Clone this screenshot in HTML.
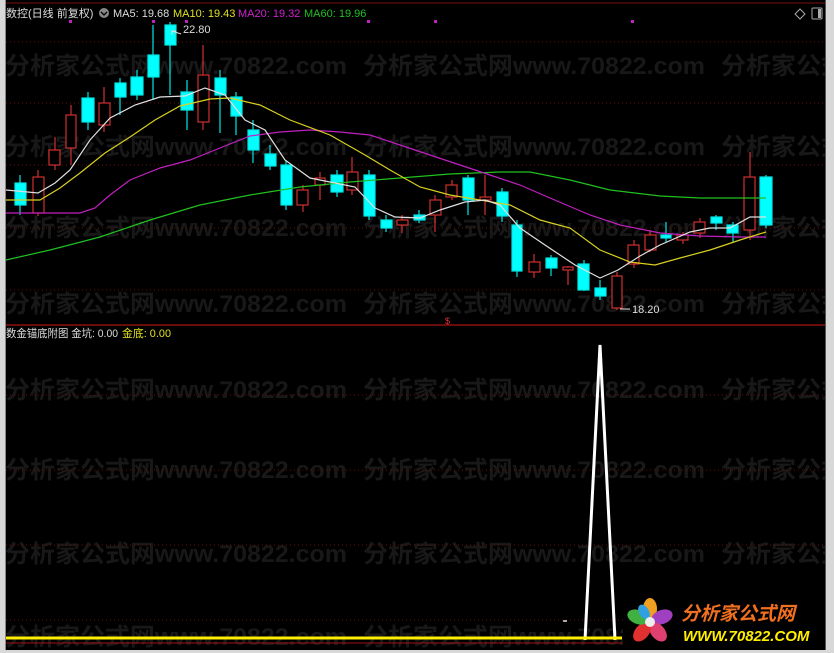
<!DOCTYPE html>
<html><head><meta charset="utf-8"><style>
html,body{margin:0;padding:0;background:#000;width:834px;height:653px;overflow:hidden}
#f{position:absolute;left:0;top:0;width:834px;height:653px}
</style></head><body>
<svg id="f" width="834" height="653" xmlns="http://www.w3.org/2000/svg">
<rect width="834" height="653" fill="#000"/>
<defs></defs>
<g font-family="Liberation Sans, Noto Sans CJK SC, sans-serif" font-weight="bold" font-size="24" fill="#181818">
<g id="r1">
<text x="5" y="74" textLength="342" lengthAdjust="spacingAndGlyphs">分析家公式网www.70822.com</text>
<text x="363" y="74" textLength="342" lengthAdjust="spacingAndGlyphs">分析家公式网www.70822.com</text>
<text x="721" y="74" textLength="342" lengthAdjust="spacingAndGlyphs">分析家公式网www.70822.com</text>
</g>
<text x="5" y="155" textLength="342" lengthAdjust="spacingAndGlyphs">分析家公式网www.70822.com</text>
<text x="363" y="155" textLength="342" lengthAdjust="spacingAndGlyphs">分析家公式网www.70822.com</text>
<text x="721" y="155" textLength="342" lengthAdjust="spacingAndGlyphs">分析家公式网www.70822.com</text>
<text x="5" y="236" textLength="342" lengthAdjust="spacingAndGlyphs">分析家公式网www.70822.com</text>
<text x="363" y="236" textLength="342" lengthAdjust="spacingAndGlyphs">分析家公式网www.70822.com</text>
<text x="721" y="236" textLength="342" lengthAdjust="spacingAndGlyphs">分析家公式网www.70822.com</text>
<text x="5" y="312" textLength="342" lengthAdjust="spacingAndGlyphs">分析家公式网www.70822.com</text>
<text x="363" y="312" textLength="342" lengthAdjust="spacingAndGlyphs">分析家公式网www.70822.com</text>
<text x="721" y="312" textLength="342" lengthAdjust="spacingAndGlyphs">分析家公式网www.70822.com</text>
<text x="5" y="398" textLength="342" lengthAdjust="spacingAndGlyphs">分析家公式网www.70822.com</text>
<text x="363" y="398" textLength="342" lengthAdjust="spacingAndGlyphs">分析家公式网www.70822.com</text>
<text x="721" y="398" textLength="342" lengthAdjust="spacingAndGlyphs">分析家公式网www.70822.com</text>
<text x="5" y="478" textLength="342" lengthAdjust="spacingAndGlyphs">分析家公式网www.70822.com</text>
<text x="363" y="478" textLength="342" lengthAdjust="spacingAndGlyphs">分析家公式网www.70822.com</text>
<text x="721" y="478" textLength="342" lengthAdjust="spacingAndGlyphs">分析家公式网www.70822.com</text>
<text x="5" y="562" textLength="342" lengthAdjust="spacingAndGlyphs">分析家公式网www.70822.com</text>
<text x="363" y="562" textLength="342" lengthAdjust="spacingAndGlyphs">分析家公式网www.70822.com</text>
<text x="721" y="562" textLength="342" lengthAdjust="spacingAndGlyphs">分析家公式网www.70822.com</text>
<text x="5" y="645" textLength="342" lengthAdjust="spacingAndGlyphs">分析家公式网www.70822.com</text>
<text x="363" y="645" textLength="342" lengthAdjust="spacingAndGlyphs">分析家公式网www.70822.com</text>
<text x="721" y="645" textLength="342" lengthAdjust="spacingAndGlyphs">分析家公式网www.70822.com</text>
</g>
<g stroke="#6a1010" stroke-width="1" stroke-dasharray="1,3">
<line x1="6" y1="42" x2="825" y2="42"/><line x1="6" y1="103" x2="825" y2="103"/><line x1="6" y1="165" x2="825" y2="165"/><line x1="6" y1="228" x2="825" y2="228"/><line x1="6" y1="290" x2="825" y2="290"/>
<line x1="6" y1="395" x2="825" y2="395"/><line x1="6" y1="470" x2="825" y2="470"/><line x1="6" y1="545" x2="825" y2="545"/><line x1="6" y1="620" x2="825" y2="620"/>
</g>
<line x1="6" y1="325" x2="825" y2="325" stroke="#8a1010" stroke-width="1.5"/>
<line x1="6" y1="3" x2="825" y2="3" stroke="#7a1010" stroke-width="1"/>
<g fill="#c020c0"><rect x="69" y="20" width="3" height="3"/><rect x="152" y="20" width="3" height="3"/><rect x="185" y="20" width="3" height="3"/><rect x="367" y="20" width="3" height="3"/><rect x="434" y="20" width="3" height="3"/><rect x="631" y="20" width="3" height="3"/></g>
<g stroke-width="1.2">
<g stroke="#00e5e5" fill="#00ffff">
<line x1="20" y1="175" x2="20" y2="215"/><rect x="15" y="183" width="11" height="22"/>
<line x1="88" y1="92" x2="88" y2="130"/><rect x="82" y="98" width="12" height="24"/>
<line x1="120" y1="78" x2="120" y2="115"/><rect x="115" y="83" width="11" height="14"/>
<line x1="137" y1="70" x2="137" y2="100"/><rect x="131" y="77" width="12" height="18"/>
<line x1="153" y1="25" x2="153" y2="100"/><rect x="148" y="55" width="11" height="22"/>
<line x1="170" y1="22" x2="170" y2="95"/><rect x="165" y="25" width="11" height="20"/>
<line x1="187" y1="80" x2="187" y2="130"/><rect x="181" y="92" width="12" height="18"/>
<line x1="220" y1="70" x2="220" y2="133"/><rect x="215" y="78" width="11" height="17"/>
<line x1="236" y1="92" x2="236" y2="135"/><rect x="231" y="97" width="11" height="19"/>
<line x1="253" y1="120" x2="253" y2="163"/><rect x="248" y="130" width="11" height="20"/>
<line x1="270" y1="145" x2="270" y2="170"/><rect x="265" y="154" width="11" height="12"/>
<line x1="286" y1="160" x2="286" y2="210"/><rect x="281" y="165" width="11" height="40"/>
<line x1="337" y1="170" x2="337" y2="197"/><rect x="331" y="175" width="12" height="17"/>
<line x1="369" y1="170" x2="369" y2="220"/><rect x="364" y="175" width="11" height="41"/>
<line x1="386" y1="215" x2="386" y2="232"/><rect x="381" y="220" width="11" height="8"/>
<line x1="419" y1="210" x2="419" y2="223"/><rect x="414" y="215" width="11" height="5"/>
<line x1="468" y1="175" x2="468" y2="215"/><rect x="463" y="178" width="11" height="22"/>
<line x1="502" y1="188" x2="502" y2="222"/><rect x="497" y="192" width="11" height="24"/>
<line x1="517" y1="220" x2="517" y2="277"/><rect x="512" y="225" width="10" height="46"/>
<line x1="551" y1="255" x2="551" y2="276"/><rect x="546" y="258" width="11" height="10"/>
<line x1="584" y1="260" x2="584" y2="291"/><rect x="578" y="264" width="11" height="26"/>
<line x1="600" y1="280" x2="600" y2="300"/><rect x="595" y="288" width="11" height="8"/>
<line x1="666" y1="222" x2="666" y2="242"/><rect x="661" y="235" width="10" height="3"/>
<line x1="716" y1="215" x2="716" y2="230"/><rect x="711" y="217" width="11" height="6"/>
<line x1="733" y1="222" x2="733" y2="242"/><rect x="727" y="225" width="11" height="8"/>
<line x1="766" y1="175" x2="766" y2="228"/><rect x="760" y="177" width="12" height="48"/>
</g>
<g stroke="#d03030" fill="#000">
<line x1="38" y1="170" x2="38" y2="216"/><rect x="33" y="177" width="11" height="36"/>
<line x1="55" y1="137" x2="55" y2="170"/><rect x="49" y="150" width="11" height="15"/>
<line x1="71" y1="105" x2="71" y2="165"/><rect x="66" y="115" width="10" height="33"/>
<line x1="104" y1="87" x2="104" y2="132"/><rect x="99" y="103" width="11" height="22"/>
<line x1="203" y1="45" x2="203" y2="130"/><rect x="198" y="75" width="11" height="47"/>
<line x1="303" y1="185" x2="303" y2="212"/><rect x="297" y="190" width="11" height="15"/>
<line x1="320" y1="172" x2="320" y2="200"/><rect x="315" y="178" width="10" height="7"/>
<line x1="352" y1="157" x2="352" y2="195"/><rect x="347" y="172" width="11" height="18"/>
<line x1="402" y1="215" x2="402" y2="233"/><rect x="397" y="220" width="11" height="5"/>
<line x1="435" y1="195" x2="435" y2="232"/><rect x="430" y="200" width="11" height="15"/>
<line x1="452" y1="180" x2="452" y2="200"/><rect x="446" y="185" width="11" height="12"/>
<line x1="485" y1="175" x2="485" y2="215"/><rect x="480" y="197" width="11" height="3"/>
<line x1="534" y1="254" x2="534" y2="278"/><rect x="529" y="262" width="11" height="10"/>
<line x1="568" y1="266" x2="568" y2="285"/><rect x="563" y="267" width="10" height="3"/>
<line x1="617" y1="272" x2="617" y2="310"/><rect x="612" y="276" width="10" height="32"/>
<line x1="634" y1="240" x2="634" y2="268"/><rect x="628" y="245" width="11" height="19"/>
<line x1="650" y1="230" x2="650" y2="252"/><rect x="645" y="235" width="11" height="15"/>
<line x1="683" y1="232" x2="683" y2="244"/><rect x="677" y="235" width="11" height="5"/>
<line x1="700" y1="218" x2="700" y2="238"/><rect x="694" y="222" width="11" height="11"/>
<line x1="750" y1="152" x2="750" y2="240"/><rect x="744" y="177" width="11" height="53"/>
</g>
</g>
<g fill="none" stroke-width="1.2">
<polyline stroke="#20c020" points="6,260 50,250 100,237 150,220 200,205 250,195 300,187 350,182 400,178 450,174 500,172 530,172 570,180 610,190 660,196 700,198 740,198 766,198"/>
<polyline stroke="#c020c0" points="6,213 60,213 80,213 95,208 110,195 130,180 160,168 190,160 220,148 250,136 280,132 310,130 340,132 370,135 400,145 430,155 460,165 490,175 520,185 550,198 590,215 620,225 660,233 700,236 740,237 766,237"/>
<polyline stroke="#d8d020" points="6,200 40,200 60,188 80,173 105,153 130,137 155,120 180,106 210,99 230,98 260,105 290,120 330,135 365,155 390,170 420,187 450,195 480,200 510,205 540,220 570,228 600,250 630,262 655,265 680,258 710,250 740,240 766,232"/>
<polyline stroke="#e0e0e0" points="6,190 38,193 55,183 70,170 90,140 110,118 135,105 160,97 185,96 205,88 225,95 245,120 265,130 285,160 310,178 335,183 355,187 375,208 395,217 420,218 440,210 465,202 485,200 500,205 520,228 545,245 575,265 600,278 618,270 640,256 660,245 690,232 710,228 730,228 750,217 766,217"/>
</g>
<g font-family="Liberation Sans, Noto Sans CJK SC, sans-serif" font-size="11" fill="#ddd">
<polyline points="176,31 172,31 172,35" fill="none" stroke="#ddd"/><line x1="172" y1="31" x2="181" y2="34" stroke="#ddd"/>
<text x="183" y="33">22.80</text>
<line x1="620" y1="309" x2="630" y2="309" stroke="#ddd"/>
<text x="632" y="313">18.20</text>
<text x="445" y="324" fill="#e03030" font-size="9">$</text>
</g>
<g font-family="Liberation Sans, Noto Sans CJK SC, sans-serif" font-size="11">
<text x="6" y="17" fill="#ddd">数控(日线 前复权)</text>
<circle cx="104" cy="13" r="5" fill="#888"/><path d="M101,12 L104,15 L107,12" stroke="#000" stroke-width="1.3" fill="none"/>
<text x="113" y="17" fill="#ddd">MA5: 19.68</text>
<text x="173" y="17" fill="#e0e020">MA10: 19.43</text>
<text x="238" y="17" fill="#d020d0">MA20: 19.32</text>
<text x="304" y="17" fill="#20c020">MA60: 19.96</text>
<text x="6" y="337" fill="#ddd" textLength="112" lengthAdjust="spacingAndGlyphs">数金锚底附图 金坑: 0.00</text>
<text x="122" y="337" fill="#e0e020" textLength="49" lengthAdjust="spacingAndGlyphs">金底: 0.00</text>
</g>
<path d="M800,9 L805,14 L800,19 L795,14 Z" stroke="#aaa" fill="none"/>
<rect x="812" y="8" width="10" height="11" rx="1" stroke="#aaa" fill="none"/><rect x="818" y="9" width="3" height="9" fill="#aaa"/>
<polyline points="585,640 600,345 615,640" fill="none" stroke="#fff" stroke-width="3"/>
<rect x="563" y="620" width="4" height="2" fill="#aaa"/>
<line x1="6" y1="638" x2="622" y2="638" stroke="#ffee00" stroke-width="3"/>
<line x1="6" y1="643" x2="622" y2="643" stroke="#a01010" stroke-width="1"/>
<rect x="623" y="598" width="203" height="52" fill="#000"/>
<g transform="translate(650,622)">
<ellipse cx="0" cy="-13" rx="7" ry="11" fill="#f0a020"/>
<ellipse cx="12" cy="-5" rx="7" ry="11" fill="#a040c0" transform="rotate(70 12 -5)"/>
<ellipse cx="8" cy="10" rx="7" ry="11" fill="#e04070" transform="rotate(-40 8 10)"/>
<ellipse cx="-8" cy="10" rx="7" ry="11" fill="#e03030" transform="rotate(40 -8 10)"/>
<ellipse cx="-12" cy="-5" rx="7" ry="11" fill="#40b040" transform="rotate(-70 -12 -5)"/>
<ellipse cx="-6" cy="-10" rx="5" ry="8" fill="#30a0e0" transform="rotate(-30 -6 -10)"/>
<circle cx="0" cy="0" r="5" fill="#eee"/>
</g>
<text x="681" y="620" font-family="Liberation Sans, Noto Sans CJK SC, sans-serif" font-weight="bold" font-style="italic" font-size="19" fill="#f07020">分析家公式网</text>
<text x="683" y="641" font-family="Liberation Sans, sans-serif" font-weight="bold" font-style="italic" font-size="15" fill="#ffee00">WWW.70822.COM</text>
<rect x="0" y="0" width="6" height="653" fill="#d8d8d8"/>
<rect x="5" y="0" width="1" height="653" fill="#888"/>
<rect x="825" y="0" width="9" height="653" fill="#d8d8d8"/>
<rect x="825" y="0" width="1" height="653" fill="#555"/>
<rect x="0" y="650" width="834" height="3" fill="#d8d8d8"/>
</svg>
</body></html>
